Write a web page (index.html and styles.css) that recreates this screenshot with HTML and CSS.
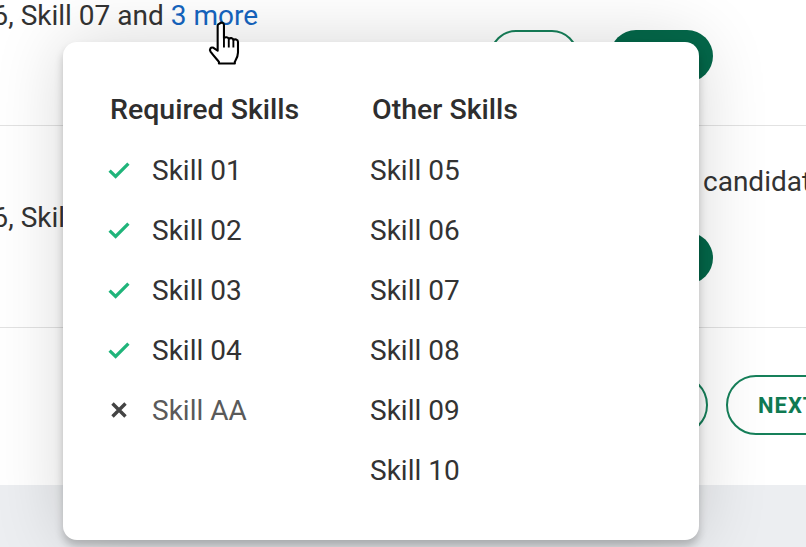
FILE: index.html
```html
<!DOCTYPE html>
<html lang="en">
<head>
    <meta charset="UTF-8">
    <meta name="viewport" content="width=device-width, initial-scale=1.0">
    <title>Candidate Skills</title>
    <link rel="stylesheet" href="styles.css">
</head>
<body>
    <div class="page">
        <div class="results">
            <!-- Result 1 -->
            <div class="result">
                <div class="result-meta">candidates</div>
                <div class="skills-summary">
                    <span>Skill 05, Skill 06, Skill 07 and <a href="#" class="more-link">3 more</a></span>
                </div>
                <div class="actions">
                    <button class="btn btn-outline">VIEW</button>
                    <button class="btn btn-filled">APPLY</button>
                </div>
            </div>

            <!-- Result 2 -->
            <div class="result">
                <div class="result-meta">candidates</div>
                <div class="skills-summary">
                    <span>Skill 05, Skill 06, Skill 07 and <a href="#" class="more-link">3 more</a></span>
                </div>
                <div class="actions">
                    <button class="btn btn-outline">VIEW</button>
                    <button class="btn btn-filled">APPLY</button>
                </div>
            </div>

            <!-- Pager -->
            <div class="pager">
                <button class="btn btn-outline btn-large">BACK</button>
                <button class="btn btn-outline btn-large">NEXT</button>
            </div>
        </div>
        <div class="footer"></div>

        <!-- Skills popover -->
        <div class="skills-popover">
            <div class="skills-column">
                <div class="skills-heading">Required Skills</div>
                <div class="skill-item">
                    <svg class="skill-icon" viewBox="0 0 22 17" width="22" height="17"><path d="M1.6 8.6L7.6 14.4L20.4 1.6" fill="none" stroke="#1fb47a" stroke-width="3.2"/></svg>
                    <span>Skill 01</span>
                </div>
                <div class="skill-item">
                    <svg class="skill-icon" viewBox="0 0 22 17" width="22" height="17"><path d="M1.6 8.6L7.6 14.4L20.4 1.6" fill="none" stroke="#1fb47a" stroke-width="3.2"/></svg>
                    <span>Skill 02</span>
                </div>
                <div class="skill-item">
                    <svg class="skill-icon" viewBox="0 0 22 17" width="22" height="17"><path d="M1.6 8.6L7.6 14.4L20.4 1.6" fill="none" stroke="#1fb47a" stroke-width="3.2"/></svg>
                    <span>Skill 03</span>
                </div>
                <div class="skill-item">
                    <svg class="skill-icon" viewBox="0 0 22 17" width="22" height="17"><path d="M1.6 8.6L7.6 14.4L20.4 1.6" fill="none" stroke="#1fb47a" stroke-width="3.2"/></svg>
                    <span>Skill 04</span>
                </div>
                <div class="skill-item missing">
                    <svg class="skill-icon" viewBox="0 0 22 17" width="22" height="17"><path d="M4.5 1.5L17.5 14.5M17.5 1.5L4.5 14.5" stroke="#444" stroke-width="3.4"/></svg>
                    <span>Skill AA</span>
                </div>
            </div>
            <div class="skills-column">
                <div class="skills-heading">Other Skills</div>
                <div class="skill-item">Skill 05</div>
                <div class="skill-item">Skill 06</div>
                <div class="skill-item">Skill 07</div>
                <div class="skill-item">Skill 08</div>
                <div class="skill-item">Skill 09</div>
                <div class="skill-item">Skill 10</div>
            </div>
        </div>

        <!-- Mouse cursor over the link -->
        <svg class="cursor" viewBox="0 0 17 21" width="36" height="44">
            <path d="M6 1.2C6.9 0.4 8 0.9 8 1.9V8.2C8.6 7.5 10 7.6 10.3 8.6C10.9 7.9 12.3 8 12.5 9.1C13.1 8.5 14.7 8.7 14.7 10V15C14.7 17.2 13.8 18.4 13.2 19.4V20.3H5.6V19.5C4.6 18.2 3.2 16.8 1.6 14.6C0.9 13.5 1.7 12.2 3 12.8L5 14.2V2.2C5 1.8 5.5 1.4 6 1.2Z" fill="#fff" stroke="#000" stroke-width="1" stroke-linejoin="round"/>
            <path d="M8 8.4V12.6M10.3 8.8V12.6M12.5 9.3V12.6" stroke="#000" stroke-width="0.9"/>
        </svg>
    </div>
</body>
</html>
```

FILE: styles.css
```css
* {
    box-sizing: border-box;
}

body {
    margin: 0;
    background: #fff;
    color: #333;
    font-family: Roboto, "Noto Sans", sans-serif;
}

.page {
    position: relative;
    width: 806px;
    height: 547px;
    overflow: hidden;
}

.results {
    margin-top: -76px;
}

.result {
    height: 202px;
    border-bottom: 1px solid #e2e2e2;
}

.result-meta {
    height: 76px;
    padding: 40px 0 0 703px;
    font-size: 28px;
    line-height: 32px;
    white-space: nowrap;
}

.skills-summary {
    display: flex;
    justify-content: flex-end;
    width: 258px;
    font-size: 28px;
    line-height: 32px;
    white-space: nowrap;
}

.more-link {
    color: #1565c0;
    text-decoration: none;
}

.actions {
    display: flex;
    gap: 32px;
    margin-top: -2px;
    padding-left: 490px;
}

.btn {
    height: 52px;
    border-radius: 30px;
    font-family: Roboto, sans-serif;
    font-size: 22px;
    font-weight: 700;
    letter-spacing: 1px;
    cursor: pointer;
}

.btn-outline {
    width: 88px;
    border: 2px solid #16805a;
    background: #fff;
    color: #0f7a52;
}

.btn-filled {
    width: 103px;
    border: none;
    background: #04684a;
    color: #fff;
}

.btn-large {
    width: 130px;
    height: 60px;
    padding: 0 0 0 30px;
    text-align: left;
}

.pager {
    display: flex;
    gap: 18px;
    height: 157px;
    padding: 47px 0 0 578px;
    width: 900px;
}

.footer {
    height: 62px;
    background: #eceef1;
}

.skills-popover {
    position: absolute;
    left: 63px;
    top: 42px;
    width: 636px;
    height: 498px;
    padding: 38px 0 0 45px;
    display: grid;
    grid-template-columns: 262px 1fr;
    background: #fff;
    border-radius: 14px;
    box-shadow: 0 6px 8px rgba(0, 0, 0, 0.22), 0 0 70px rgba(0, 0, 0, 0.16);
}

.skills-heading {
    padding-left: 2px;
    font-size: 28.5px;
    font-weight: 500;
    line-height: 60px;
    color: #2e2e2e;
}

.skill-item {
    display: flex;
    align-items: center;
    gap: 22px;
    height: 60px;
    font-size: 28px;
    color: #333;
}

.skill-item.missing {
    color: #5a5a5a;
}

.skill-icon {
    flex: none;
}

.cursor {
    position: absolute;
    left: 207px;
    top: 21px;
}
```
